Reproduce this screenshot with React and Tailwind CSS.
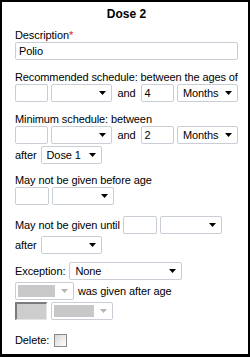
import React from 'react';

function Arrow({ disabled }) {
  return (
    <svg width="7" height="4" viewBox="0 0 7 4" className="shrink-0">
      <path d="M0 0h7L3.5 4z" fill={disabled ? '#b4b4b4' : '#000'} />
    </svg>
  );
}

function TextBox({ w, value, disabled }) {
  if (disabled) {
    return (
      <div className={`${w} h-[18px] bg-[#cdcdcd] border-t-2 border-l-2 border-r border-b border-t-[#7a7a7a] border-l-[#7a7a7a] border-r-[#e4e4e4] border-b-[#e4e4e4]`} />
    );
  }
  return (
    <div className={`${w} h-[18px] bg-white border border-[#c9ced6] rounded-[2px] pl-[3px] flex items-center`}>
      {value}
    </div>
  );
}

function Select({ w, value, disabled, fillW }) {
  return (
    <div className={`${w} h-[18px] bg-white border border-[#c9ced6] rounded-[2px] flex items-center justify-between pr-[5px] ${disabled ? 'pl-[2px]' : 'pl-[5px]'}`}>
      {disabled ? <div className={`${fillW} h-[12px] bg-[#c8c8c8]`} /> : <span>{value}</span>}
      <Arrow disabled={disabled} />
    </div>
  );
}

function Label({ children, className = '' }) {
  return <div className={`h-[14px] leading-[14px] ${className}`}>{children}</div>;
}

export default function App() {
  return (
    <div className='w-[250px] h-[357px] bg-white border-2 border-b-[3px] border-black pl-[13px] pr-[10px] text-[11px] leading-[14px] tracking-[-0.1px] text-black font-["Liberation_Sans",Arial,sans-serif]'>
      <div className="mt-[4px] h-[16px] leading-[16px] text-center font-bold text-[12px] tracking-normal">Dose 2</div>

      <Label className="mt-[6px]">Description<span className="text-[#e8141b]">*</span></Label>
      <TextBox w="w-full" value="Polio" />

      <Label className="mt-[10px]">Recommended schedule: between the ages of</Label>
      <div className="flex items-center gap-[3px]">
        <TextBox w="w-[34px]" />
        <Select w="w-[62px]" value="" />
        <span className="px-[2px]">and</span>
        <TextBox w="w-[34px]" value="4" />
        <Select w="w-[62px]" value="Months" />
      </div>

      <Label className="mt-[10px]">Minimum schedule: between</Label>
      <div className="flex items-center gap-[3px]">
        <TextBox w="w-[34px]" />
        <Select w="w-[62px]" value="" />
        <span className="px-[2px]">and</span>
        <TextBox w="w-[34px]" value="2" />
        <Select w="w-[62px]" value="Months" />
      </div>
      <div className="mt-[2px] flex items-center gap-[4px]">
        <span>after</span>
        <Select w="w-[61px]" value="Dose 1" />
      </div>

      <Label className="mt-[9px]">May not be given before age</Label>
      <div className="flex items-center gap-[3px]">
        <TextBox w="w-[34px]" />
        <Select w="w-[62px]" value="" />
      </div>

      <div className="mt-[11px] flex items-center gap-[3px]">
        <span>May not be given until</span>
        <TextBox w="w-[34px]" />
        <Select w="w-[62px]" value="" />
      </div>
      <div className="mt-[2px] flex items-center gap-[4px]">
        <span>after</span>
        <Select w="w-[61px]" value="" />
      </div>

      <div className="mt-[8px] flex items-center gap-[4px]">
        <span>Exception:</span>
        <Select w="w-[113px]" value="None" />
      </div>
      <div className="mt-[2px] flex items-center gap-[4px]">
        <Select w="w-[59px]" disabled fillW="w-[37px]" />
        <span>was given after age</span>
      </div>
      <div className="mt-[2px] flex items-center gap-[4px]">
        <TextBox w="w-[32px]" disabled />
        <Select w="w-[62px]" disabled fillW="w-[40px]" />
      </div>

      <div className="mt-[13px] h-[14px] flex items-center gap-[5px]">
        <span>Delete:</span>
        <div className="w-[13px] h-[13px] border border-[#8b8b8b] bg-gradient-to-br from-[#d6d6d6] to-[#ffffff]" />
      </div>
    </div>
  );
}
